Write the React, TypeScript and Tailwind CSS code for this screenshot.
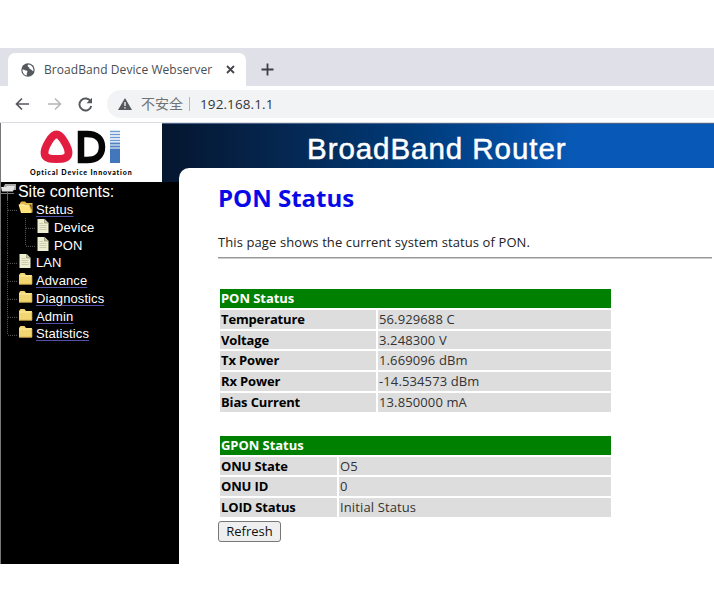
import React from 'react'

type Row = {
    label: string;
    value: string;
}

type TreeItem = {
    label: string;
    icon: "open" | "folder" | "doc";
    nested?: boolean;
    last?: boolean;
}

const ponRows: Row[] = [
    { label: "Temperature", value: "56.929688 C" },
    { label: "Voltage", value: "3.248300 V" },
    { label: "Tx Power", value: "1.669096 dBm" },
    { label: "Rx Power", value: "-14.534573 dBm" },
    { label: "Bias Current", value: "13.850000 mA" },
]

const gponRows: Row[] = [
    { label: "ONU State", value: "O5" },
    { label: "ONU ID", value: "0" },
    { label: "LOID Status", value: "Initial Status" },
]

const treeItems: TreeItem[] = [
    { label: "Status", icon: "open" },
    { label: "Device", icon: "doc", nested: true },
    { label: "PON", icon: "doc", nested: true, last: true },
    { label: "LAN", icon: "doc" },
    { label: "Advance", icon: "folder" },
    { label: "Diagnostics", icon: "folder" },
    { label: "Admin", icon: "folder" },
    { label: "Statistics", icon: "folder", last: true },
]

const Branch = ({ end, tick }: { end?: boolean; tick?: boolean }) => (
    <svg className="h-full w-[18px] shrink-0" viewBox="0 0 18 18" preserveAspectRatio="none" stroke="#5c5c5c" strokeDasharray="1 1">
        <path d={end ? "M7.5 0V10" : "M7.5 0V18"} />
        {tick && <path d="M8 10.500H18" />}
    </svg>
)

const TreeIcon = ({ icon }: { icon: TreeItem["icon"] }) => {
    if (icon === "doc") {
        return (
            <svg className="h-[18px] w-[18px] shrink-0" viewBox="0 0 18 18">
                <path d="M1.500 1H8.500L12.500 5V15H1.500Z" fill="#eeeed2" />
                <path d="M8.500 1V5H12.500" fill="#c9c9a8" stroke="#8b8b70" strokeWidth=".7" />
                <path d="M3.500 5.500H7.500M3.500 7.500H10.500M3.500 9.500H10.500M3.500 11.500H10.500" stroke="#c3c3a6" strokeWidth=".8" />
            </svg>
        )
    }
    if (icon === "open") {
        return (
            <svg className="h-[18px] w-[18px] shrink-0" viewBox="0 0 18 18">
                <path d="M2 6V3L3.500 1.500H7L8.500 3H14.500V12.500H5Z" fill="#e3b94c" />
                <path d="M11.500 4.500H13.500L13.800 10" fill="#6b4a10" />
                <path d="M.5 4.500H6L7 5.500H11L13.500 13H3Z" fill="#ffe27a" />
                <path d="M1 5H6L7 6H11" stroke="#fff3b0" fill="none" />
            </svg>
        )
    }
    return (
        <svg className="h-[18px] w-[18px] shrink-0" viewBox="0 0 18 18">
            <path d="M1 4L2.500 2H6.500L8 4H14V13.500H1Z" fill="#f2d671" />
            <path d="M1.500 5H13.500" stroke="#fff0a4" />
            <path d="M1 13.200H14V5" stroke="#c49a3c" fill="none" strokeWidth=".7" />
        </svg>
    )
}

const TreeRow = ({ item }: { item: TreeItem }) => (
    <div className="flex h-[17.8px] items-center">
        {item.nested && <Branch />}
        <Branch tick end={item.last} />
        <TreeIcon icon={item.icon} />
        <span className={item.icon === "doc"
            ? "pt-[2px] text-[13px] leading-[18px] tracking-[0.1px]"
            : "pt-[2px] text-[13px] leading-[18px] tracking-[0.1px] underline decoration-[#5151a8] underline-offset-2"}>
            {item.label}
        </span>
    </div>
)

const StatusTable = ({ title, rows, columns }: { title: string; rows: Row[]; columns: string }) => (
    <div className="ml-[2px] flex w-[391px] flex-col gap-[2px] text-[13px] leading-[18.7px]">
        <div className="h-[18.7px] bg-[#008000] pl-[1px] font-bold tracking-[-0.05px] text-white">{title}</div>
        {rows.map((row) => (
            <div key={row.label} className={`grid h-[18.7px] gap-[2px] ${columns}`}>
                <div className="bg-[#dddddd] pl-[1px] font-bold tracking-[-0.15px] text-black">{row.label}</div>
                <div className="bg-[#dddddd] pl-[1px] tracking-[0.12px] text-[#333]">{row.value}</div>
            </div>
        ))}
    </div>
)

const BrowserBar = () => (
    <div className="h-[75px] font-['Open_Sans','Noto_Sans_CJK_SC',sans-serif]">
        <div className="flex h-[38px] items-end bg-[#dfe0e8] pl-[8px]">
            <div className="flex h-[33px] w-[238px] items-center rounded-t-[7px] bg-white pl-[13px] text-[#4a4d51]">
                <svg className="h-[14px] w-[14px]" viewBox="0 0 14 14">
                    <circle cx="7" cy="7" r="6.700" fill="#55585c" />
                    <path d="M1.500 6.500C3 6 4 7.500 5.500 7.500C7 7.800 6.500 9.500 5.800 10V12.400C3 12 1.300 9.500 1.500 6.500ZM7.500 1.500C6 2.500 6.500 4 8 4.200C8.500 5.800 9 6.200 10 6.500C11 7 11.500 8.200 12.400 8.200C12.800 5 11 2 7.500 1.500Z" fill="#fff" />
                </svg>
                <span className="ml-[9px] w-[169px] pt-[1px] text-[12px] leading-[16px] tracking-[0.07px] whitespace-nowrap">BroadBand Device Webserver</span>
                <svg className="ml-[13px] h-[9px] w-[9px]" viewBox="0 0 9 9" stroke="#44474b" strokeWidth="1.800">
                    <path d="M1 1L8 8M8 1L1 8" />
                </svg>
            </div>
            <svg className="mb-[10px] ml-[15px] h-[13px] w-[13px]" viewBox="0 0 13 13" stroke="#3c4043" strokeWidth="1.800">
                <path d="M6.500 .5V12.500M.5 6.500H12.500" />
            </svg>
        </div>
        <div className="flex h-[37px] items-center border-b border-[#dcdde2] bg-white pl-[15px]">
            <svg className="h-[14px] w-[15px]" viewBox="0 0 15 14" fill="none" stroke="#55585c" strokeWidth="1.700">
                <path d="M14 7H2M7 1.500L1.500 7L7 12.500" />
            </svg>
            <svg className="ml-[17px] h-[14px] w-[15px]" viewBox="0 0 15 14" fill="none" stroke="#b4b6b9" strokeWidth="1.500">
                <path d="M1 7H13M8 1.500L13.500 7L8 12.500" />
            </svg>
            <svg className="ml-[16px] h-[15px] w-[15px]" viewBox="0 0 15 15" fill="none" stroke="#55585c" strokeWidth="1.900">
                <path d="M12.700 4.500A6 6 0 1 0 13.300 9" />
                <path d="M14 .8V6.300H8.500Z" fill="#55585c" stroke="none" />
            </svg>
            <div className="ml-[14px] flex h-[28px] flex-1 items-center rounded-l-full bg-[#f1f3f4] pl-[11px]">
                <svg className="h-[12px] w-[14px]" viewBox="0 0 14 12">
                    <path d="M7 0L14 12H0Z" fill="#55585c" />
                    <path d="M7 4V8M7 9.200V10.600" stroke="#fff" strokeWidth="1.300" />
                </svg>
                <span className="ml-[9px] text-[14px] leading-[18px] text-[#707276]">不安全</span>
                <span className="ml-[6px] h-[14px] w-px bg-[#b5b7ba]" />
                <span className="ml-[10px] text-[13.500px] leading-[18px] tracking-[0.1px] text-[#33363a]">192.168.1.1</span>
            </div>
        </div>
    </div>
)

const Logo = () => (
    <div className="flex h-[59px] w-[161px] flex-col bg-white pt-[7px] pl-[39px]">
        <svg className="h-[34px] w-[82px]" viewBox="0 0 82 34">
            <path d="M16.500 4.500C21.500 4.500 29 18 28.500 23.500C28 29 22 29 16.500 29C11 29 5 29 4.500 23.500C4 18 11.500 4.500 16.500 4.500Z" fill="none" stroke="#e21d40" strokeWidth="7.800" strokeLinejoin="round" />
            <path d="M41 4H47C57 4 62 9 62 17C62 25 57 30 47 30H41Z" fill="none" stroke="#050505" strokeWidth="6.500" />
            <path d="M70 1.500H80M70 4.500H80M70 7.500H80M70 10.500H80" stroke="#6d9ad0" strokeWidth="1.500" />
            <path d="M70 13.500H80M70 16.500H80" stroke="#4f82c2" strokeWidth="2.200" />
            <path d="M70 18.500H80V33H70Z" fill="#4277bb" />
        </svg>
        <span className="mt-[4px] -ml-[10px] text-[7px] leading-[8px] font-black tracking-[0.85px] whitespace-nowrap text-black">Optical Device Innovation</span>
    </div>
)

const Sidebar = () => (
    <nav className="-ml-px w-[179px] shrink-0 font-['Liberation_Sans',sans-serif] text-white">
        <div className="flex h-[18px] items-center">
            <svg className="h-[18px] w-[18px] shrink-0" viewBox="0 0 18 18">
                <path d="M5 2H16V8H2Z" fill="#a9a9a9" />
                <path d="M1 5H6L7 4H15L13 9.500H2Z" fill="#e2e2e2" />
                <path d="M1 11.500H14" stroke="#7d7d7d" />
                <path d="M7.500 10V18" stroke="#705c42" />
            </svg>
            <span className="pt-[1px] text-[16px] leading-[18px] tracking-[-0.05px]">Site contents:</span>
        </div>
        {treeItems.map((item) => <TreeRow key={item.label} item={item} />)}
    </nav>
)

const App = () => {
    return (
        <div className="h-[607px] w-[714px] overflow-hidden bg-white pt-[48px]">
            <BrowserBar />
            <div className="flex h-[441px] flex-col border-l border-[#777] bg-black">
                <header className="flex h-[59px] shrink-0 font-['Lato',sans-serif]">
                    <Logo />
                    <div className="flex flex-1 border-t border-[#4a6288] bg-linear-to-r from-[#05162f] from-0% via-[#003a78] via-45% to-[#0859b7] to-75%">
                        <h1 className="mt-[7px] ml-[145px] text-[29.5px] leading-[35px] font-medium tracking-[0.95px] whitespace-nowrap text-white [-webkit-text-stroke:0.5px_white] font-['Liberation_Sans',sans-serif]">BroadBand Router</h1>
                    </div>
                </header>
                <div className="flex min-h-0 flex-1">
                    <Sidebar />
                    <main className="relative -mt-[14px] h-[396px] flex-1 rounded-tl-[10px] bg-white pl-[39px] font-['Open_Sans',sans-serif]">
                        <h2 className="pt-[14px] text-[24px] leading-[32px] font-bold text-[#0909e8]">PON Status</h2>
                        <p className="mt-[18px] text-[13px] leading-[20px] tracking-[0.1px] whitespace-nowrap text-[#222]">This page shows the current system status of PON.</p>
                        <div className="mt-[5px] mb-[30.4px] h-[2px] w-[494px] border-t border-[#999] bg-[#ccc]" />
                        <StatusTable title="PON Status" rows={ponRows} columns="grid-cols-[156px_1fr]" />
                        <div className="h-[24.500px]" />
                        <StatusTable title="GPON Status" rows={gponRows} columns="grid-cols-[117px_1fr]" />
                        <button type="button" className="mt-[4px] block h-[21px] w-[63px] rounded-[3px] border border-[#777] bg-[#efefef] text-[13px] leading-[18px] text-[#111]">
                            Refresh
                        </button>
                    </main>
                </div>
            </div>
        </div>
    )
}

export default App
